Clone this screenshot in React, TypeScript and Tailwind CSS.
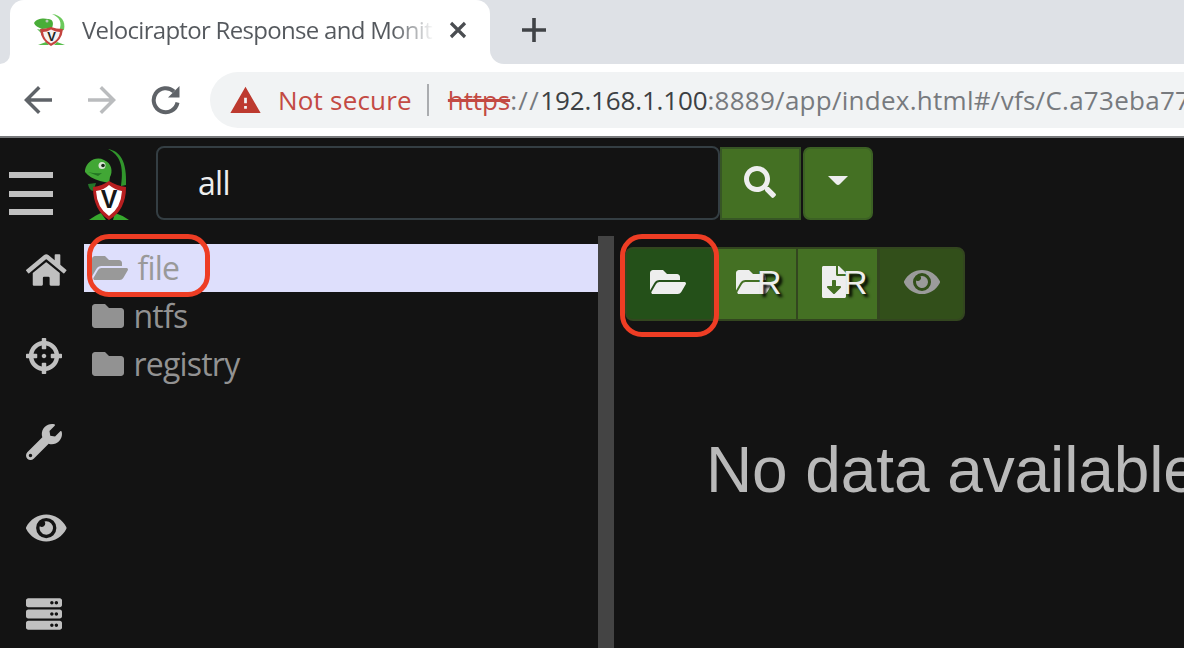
import type { ReactNode } from 'react';
import { FaCrosshairs, FaEye, FaFileDownload, FaFolder, FaFolderOpen, FaHome, FaSearch, FaServer, FaWrench } from 'react-icons/fa';
import { MdArrowBack, MdArrowForward, MdWarning } from 'react-icons/md';

function Mascot({ className }: { className: string }) {
  return (
    <svg viewBox="0 0 46 74" preserveAspectRatio="none" className={className}>
      <path d="M24 1C36 3 43 13 42 37L37 38C40 18 36 7 24 1Z" fill="#31962c" />
      <path d="M1 22C3 13 12 8 20 12C28 15 29 24 26 29L25 35L16 33C9 31 4 28 1 24Z" fill="#41a735" />
      <path d="M4 24Q12 26 18 25L14 28Z" fill="#237523" />
      <circle cx="18" cy="17.500" r="3.500" fill="#d8e5d5" />
      <circle cx="19" cy="17.500" r="1.800" fill="#182918" />
      <path d="M4 36L12 35L11 38L9 43Q5 42 4 36Z" fill="#26762a" />
      <path d="M5 72Q12 67 17 65L22 72ZM29 72L31 65Q38 67 45 72Z" fill="#37a82d" />
      <path d="M25 33Q33 38 42 39Q42 62 25 72Q9 62 9 39Q18 38 25 33Z" fill="#b81f20" />
      <path d="M25 37Q31 42 38 43Q37 60 25 68Q13 60 12 43Q20 42 25 37Z" fill="#fff" />
      <text x="25" y="60" textAnchor="middle" fontFamily="Liberation Sans, sans-serif" fontSize="25" fontWeight="700" fill="#171717">V</text>
    </svg>
  );
}

function Favicon() {
  return (
    <svg viewBox="0 0 32 33" className="ml-[24px] h-[33px] w-[32px] shrink-0">
      <path d="M18 0C27 1 32 7 30 16L25 17C29 8 25 3 18 0Z" fill="#6cc95c" />
      <path d="M0 9C3 4 10 4 14 5C19 5 20 9 18 14L8 15C4 13 1 12 0 9Z" fill="#49ad38" />
      <circle cx="13" cy="7" r="1.500" fill="#b9cbb5" />
      <path d="M3 15L8 16L7 19Z" fill="#65b95b" />
      <path d="M4 31L12 28L15 31ZM20 31L23 28L31 31Z" fill="#56bd4b" />
      <path d="M17 13Q22 15 29 15Q28 27 17 32Q7 27 6 15Q12 15 17 13Z" fill="#c4433e" />
      <path d="M17 15.500Q22 18 26 18Q25 26 17 29.500Q10 26 9 18Q13 18 17 15.500Z" fill="#f5f3f2" />
      <text x="17.500" y="26.500" textAnchor="middle" fontFamily="Liberation Sans, sans-serif" fontSize="13" fontWeight="700" fill="#1c2524">V</text>
    </svg>
  );
}

function ReloadIcon() {
  return (
    <svg viewBox="0 0 30 30" className="ml-[37px] size-[30px]" fill="none">
      <path d="M26.500 17.500A12 12 0 1 1 23 6.500" stroke="#5f6368" strokeWidth="4" />
      <path d="M28.500 1V12.500H17Z" fill="#5f6368" />
    </svg>
  );
}

function BrowserChrome() {
  return (
    <header className="h-[138px] shrink-0 border-b-2 border-[#77797b] bg-white">
      <div className="flex h-16 bg-white">
        <div className="w-[10px] shrink-0 rounded-br-[12px] bg-[#dee1e6]" />
        <div className="flex w-[480px] shrink-0 bg-[#dee1e6]">
          <div className="flex w-full items-center rounded-t-[14px] bg-white pb-[4px]">
            <Favicon />
            <div className="ml-[16px] w-[352px] bg-linear-to-r from-[#54585d] from-88% to-[#ffffff] bg-clip-text text-[24px] leading-[36px] tracking-[-0.700px] whitespace-nowrap text-transparent">
              Velociraptor Response and Monit
            </div>
            <svg viewBox="0 0 18 18" className="ml-[15px] size-[18px]"><path d="M2 2L16 16M16 2L2 16" stroke="#4a4d51" strokeWidth="3.200" /></svg>
          </div>
        </div>
        <div className="flex flex-1 items-center rounded-bl-[14px] bg-[#dee1e6] pb-[4px] pl-[32px]">
          <svg viewBox="0 0 24 24" className="size-6"><path d="M12 0V24M0 12H24" stroke="#404347" strokeWidth="3.600" /></svg>
        </div>
      </div>
      <div className="flex h-[72px] items-center">
        <MdArrowBack className="ml-[17px] size-[42px] shrink-0 text-[#5f6368]" />
        <MdArrowForward className="ml-[22px] size-[42px] shrink-0 text-[#babcbe]" />
        <div className="-ml-[9px] w-[66px] shrink-0"><ReloadIcon /></div>
        <div className="ml-[30px] flex h-[56px] flex-1 items-center overflow-hidden rounded-l-full bg-[#f1f3f4] text-[26px] whitespace-nowrap">
          <MdWarning className="ml-[19px] size-[33px] shrink-0 text-[#bd3a2f]" />
          <span className="ml-[16px] w-[135px] tracking-[0.200px] text-[#c34a43]">Not secure</span>
          <span className="ml-[15px] h-[32px] w-[2px] shrink-0 bg-[#aaacaf]" />
          <span className="ml-[19px] tracking-[0.270px] text-[#777a7e]">
            <span className="tracking-[-0.100px] text-[#c34a43] line-through decoration-[3px]">https</span>
            <span className="tracking-[1.400px]">://</span>
            <span className="tracking-[-0.150px] text-[#3c4043]">192.168.1.100</span>:8889/app/index.html#/vfs/C.a73eba77
          </span>
        </div>
      </div>
    </header>
  );
}

const navIcons = [
  { Icon: FaHome, size: 'h-9 w-[40.5px]' },
  { Icon: FaCrosshairs, size: 'size-9' },
  { Icon: FaWrench, size: 'size-9' },
  { Icon: FaEye, size: 'h-9 w-[40.5px]' },
  { Icon: FaServer, size: 'size-9' },
];

function TreeRow({ name, open }: { name: string; open?: boolean }) {
  return (
    <div className={open ? 'flex h-12 items-center bg-[#dedffc] pl-2 text-[#999]' : 'flex h-12 items-center pl-2 text-[#929292]'}>
      {open ? <FaFolderOpen className="h-8 w-9" /> : <FaFolder className="size-8" />}
      <span className="ml-[9.5px] text-[32px] leading-[48px] tracking-[-0.800px]">{name}</span>
    </div>
  );
}

function ToolButton({ className, children }: { className: string; children: ReactNode }) {
  return <button className={`flex h-[74px] items-center border-2 border-[#33461f] pb-[4px] text-[#eee] ${className}`}>{children}</button>;
}

function Recursive() {
  return <span className="block font-['Liberation_Sans',sans-serif] text-[34px] leading-none [text-shadow:3px_3px_3px_#000]">R</span>;
}

export default function App() {
  return (
    <div className="relative flex h-[648px] w-[1184px] flex-col overflow-hidden bg-[#131313] font-['Open_Sans','Noto_Sans',sans-serif]">
      <BrowserChrome />
      <div className="flex h-[98px] shrink-0 items-start pt-[8px]">
        <div className="mt-[26px] ml-[9px] flex w-[44px] flex-col gap-[12.500px]">
          <span className="h-[6px] bg-[#c0c0c0]" />
          <span className="h-[6px] bg-[#c0c0c0]" />
          <span className="h-[6px] bg-[#c0c0c0]" />
        </div>
        <Mascot className="mt-[2px] ml-[31px] h-[74px] w-[46px]" />
        <div className="ml-[26px] flex h-[74px] w-[564px] items-center rounded-[8px] border-2 border-[#343e43] pl-[40px] text-[32px] font-medium tracking-[-0.700px] text-[#eee]">all</div>
        <button className="mt-px flex h-[73px] w-[81px] items-center justify-center border-2 border-[#375625] bg-[#447023] pr-px pb-[4px]">
          <FaSearch className="size-8 text-[#eee]" />
        </button>
        <button className="mt-px ml-[2px] flex h-[73px] w-[70px] items-center justify-center rounded-[7px] border-2 border-[#3c6124] bg-[#447023] pb-[5px]">
          <svg viewBox="0 0 20 10" className="h-[10px] w-[20px]"><path d="M0 0H20L12 8Q10 10 8 8Z" fill="#eee" /></svg>
        </button>
      </div>
      <div className="flex min-h-0 flex-1">
        <nav className="flex w-[84px] shrink-0 flex-col pl-[26px]">
          {navIcons.map(({ Icon, size }, i) => (
            <div key={i} className="flex h-[86px] shrink-0 pt-[16px]">
              <Icon className={`text-[#c0c0c0] ${size}`} />
            </div>
          ))}
        </nav>
        <aside className="w-[514px] shrink-0 pt-2">
          <TreeRow name="file" open />
          <TreeRow name="ntfs" />
          <TreeRow name="registry" />
        </aside>
        <div className="w-4 shrink-0 bg-[#444]" />
        <main className="flex-1 overflow-hidden pt-[11px] pl-[11px]">
          <div className="flex">
            <ToolButton className="w-[88px] rounded-l-[8px] bg-[#245019] pl-[23px]"><FaFolderOpen className="h-8 w-9" /></ToolButton>
            <ToolButton className="-ml-px w-[86px] bg-[#447023] pl-[22px]">
              <FaFolderOpen className="h-8 w-9 shrink-0" />
              <span className="-ml-[15px]"><Recursive /></span>
            </ToolButton>
            <ToolButton className="-ml-[2px] w-[83px] bg-[#447023] pl-[24px]">
              <FaFileDownload className="h-8 w-6 shrink-0" />
              <span className="-ml-[3px]"><Recursive /></span>
            </ToolButton>
            <ToolButton className="-ml-px w-[87px] rounded-r-[8px] bg-[#324f1a] pl-[24px]"><FaEye className="h-8 w-9 text-[#9b9b9b]" /></ToolButton>
          </div>
          <div className="mt-[112px] ml-[81px] font-['Liberation_Sans',sans-serif] text-[64px] leading-[74px] tracking-[-0.100px] whitespace-nowrap text-[#b9b9b9]">No data available</div>
        </main>
      </div>
      <div className="absolute top-[234px] left-[87px] h-[63px] w-[123px] rounded-[22px] border-5 border-[#ee3d24]" />
      <div className="absolute top-[234px] left-[620px] h-[103px] w-[99px] rounded-[22px] border-5 border-[#ee3d24]" />
    </div>
  );
}
